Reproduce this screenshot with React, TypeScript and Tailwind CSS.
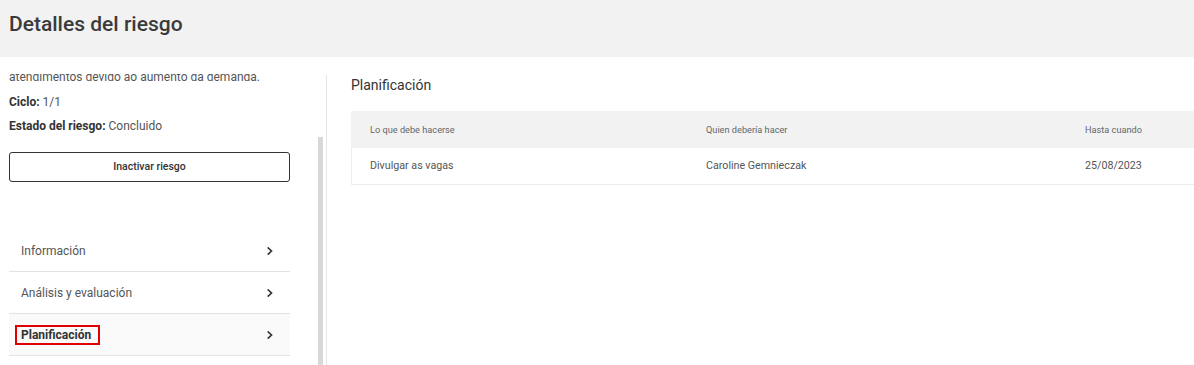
type MenuItem = {
    label: string;
    active?: boolean;
}

const menu: MenuItem[] = [
    { label: "Información" },
    { label: "Análisis y evaluación" },
    { label: "Planificación", active: true },
];

const rows = [
    { what: "Divulgar as vagas", who: "Caroline Gemnieczak", until: "25/08/2023" },
];

function Chevron() {
    return (
        <svg width="6" height="8" viewBox="0 0 6 8" fill="none">
            <path d="M1.3 1 L4.5 4 L1.3 7" stroke="#333" strokeWidth="1.7" strokeLinecap="square" />
        </svg>
    );
}

function Sidebar() {
    return (
        <div className="flex w-[326px] h-full">
            <div className="w-[318px] h-full overflow-hidden pl-[9px] pr-[28px] text-[12px] leading-[16px] text-[#555]">
                {/* list is scrolled: the description's last line sits under the top edge */}
                <p className="-mt-[5.5px]">atendimentos devido ao aumento da demanda.</p>
                <p className="mt-[9.5px]">
                    <span className="font-bold text-[#333]">Ciclo:</span> 1/1
                </p>
                <p className="mt-[8px]">
                    <span className="font-bold text-[#333]">Estado del riesgo:</span> Concluido
                </p>

                <button className="mt-[18px] w-full h-[30px] border border-[#333] rounded-[3px] text-[10.5px] font-medium text-[#333]">
                    Inactivar riesgo
                </button>

                <ul className="mt-[48px]">
                    {menu.map(({ label, active }) => (
                        <li
                            key={label}
                            className={`flex items-center justify-between h-[42px] border-b border-[#e3e3e3] pl-[12px] pr-[17px] ${active ? "bg-[#fafafa]" : ""}`}>
                            {active ? (
                                <span className="-ml-[6px] border-2 border-[#e00000] pl-[4px] pr-[7px] font-bold text-[#333]">{label}</span>
                            ) : (
                                <span>{label}</span>
                            )}
                            <Chevron />
                        </li>
                    ))}
                </ul>
            </div>
            <div className="w-[5px] pt-[63px]">
                <div className="h-full bg-[#d8d8d8]" />
            </div>
        </div>
    );
}

function Planning() {
    return (
        <div className="flex-1 mt-[1px] border-l border-[#e5e5e5] pl-[24px] overflow-hidden">
            <h2 className="text-[14px] leading-[20px] text-[#333]">Planificación</h2>

            <div className="mt-[16px] w-[900px]">
                <div className="flex items-center h-[37px] bg-[#f2f2f2] text-[9.2px] text-[#666]">
                    <div className="w-[336px] pl-[19px]">Lo que debe hacerse</div>
                    <div className="w-[379px] pl-[19px]">Quien debería hacer</div>
                    <div className="flex-1 pl-[19px]">Hasta cuando</div>
                </div>
                {rows.map((row) => (
                    <div key={row.what} className="flex items-center h-[37px] border-l border-b border-[#ececec] text-[10.7px] text-[#555]">
                        <div className="w-[335px] pl-[18px]">{row.what}</div>
                        <div className="w-[379px] pl-[19px]">{row.who}</div>
                        <div className="flex-1 pl-[19px]">{row.until}</div>
                    </div>
                ))}
            </div>
        </div>
    );
}

export default function App() {
    return (
        <div className="h-[365px] w-[1194px] overflow-hidden bg-white font-['Roboto',sans-serif]">
            <header className="h-[57px] bg-[#f2f2f2] pl-[9px] pt-[11px]">
                <h1 className="text-[21px] leading-[26px] font-medium text-[#3a3a3a]">Detalles del riesgo</h1>
            </header>

            <main className="flex h-[308px] pt-[17px]">
                <Sidebar />
                <Planning />
            </main>
        </div>
    );
}
